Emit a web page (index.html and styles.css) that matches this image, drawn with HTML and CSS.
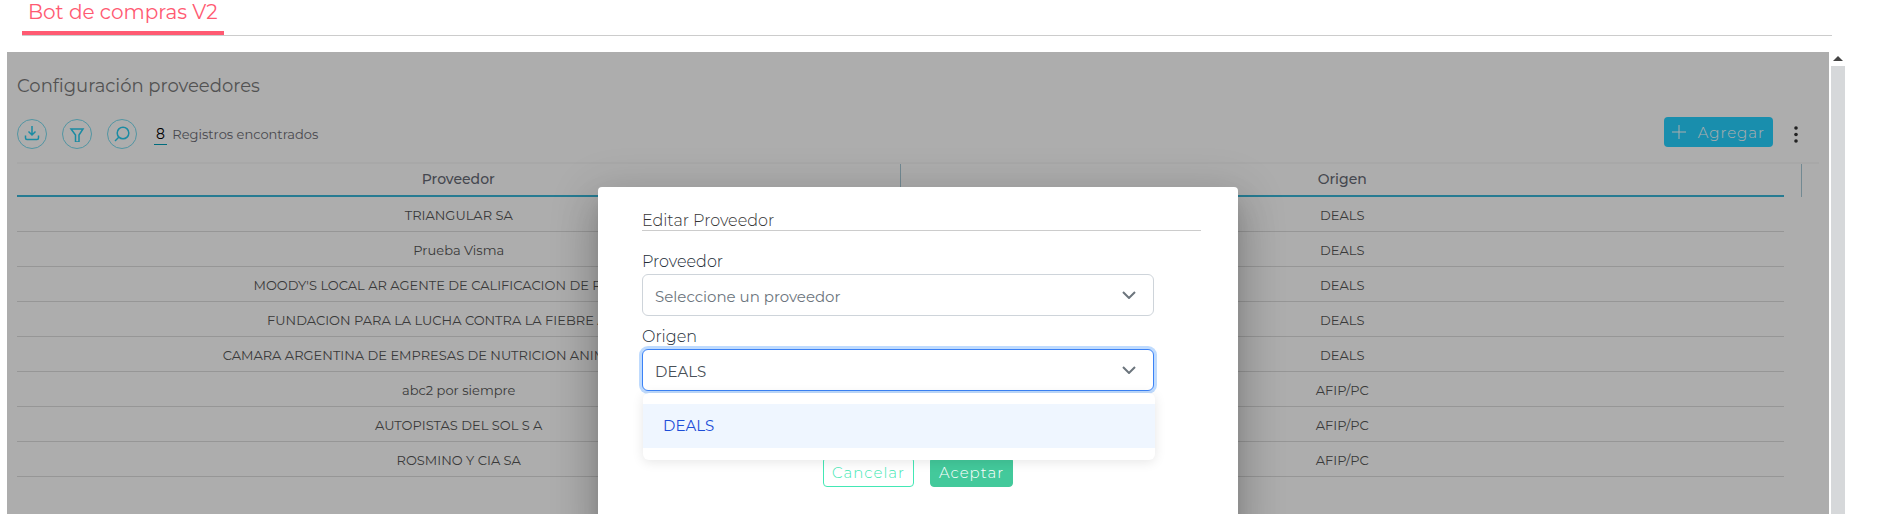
FILE: index.html
```html
<!DOCTYPE html>
<html lang="es">
<head>
    <meta charset="UTF-8">
    <meta name="viewport" content="width=device-width, initial-scale=1.0">
    <title>Bot de compras V2</title>
    <link rel="stylesheet" href="styles.css">
</head>
<body>
    <nav class="tabs">
        <a href="#" class="tab active">Bot de compras V2</a>
    </nav>

    <div class="content">
        <main class="panel">
            <h1>Configuración proveedores</h1>

            <div class="toolbar">
                <button class="icon-btn" aria-label="Descargar">
                    <svg width="16" height="16" viewBox="0 0 16 16"><path d="M8 0v9M4.500 5.500L8 9l3.500-3.500M1.500 9.500v2.500a1.500 1.500 0 0 0 1.500 1.500h10a1.500 1.500 0 0 0 1.500-1.500V9.500"/></svg>
                </button>
                <button class="icon-btn" aria-label="Filtrar">
                    <svg width="16" height="16" viewBox="0 0 16 16"><path d="M2 3h12L10 9v7H6.500V9z"/></svg>
                </button>
                <button class="icon-btn" aria-label="Buscar">
                    <svg width="16" height="16" viewBox="0 0 16 16"><circle cx="9" cy="7" r="5.800"/><path d="M5 11l-4 4"/></svg>
                </button>
                <p class="records"><span class="count">8</span> Registros encontrados</p>
                <button class="add-btn">
                    <svg width="14" height="14" viewBox="0 0 14 14"><path d="M7 0v14M0 7h14"/></svg>
                    Agregar
                </button>
                <button class="menu-btn" aria-label="Más opciones">
                    <svg width="4" height="18" viewBox="0 0 4 18"><circle cx="2" cy="3" r="1.800"/><circle cx="2" cy="9.500" r="1.800"/><circle cx="2" cy="16" r="1.800"/></svg>
                </button>
            </div>

            <div class="table-container">
                <table>
                    <thead>
                        <tr><th>Proveedor</th><th>Origen</th><td class="edge"></td></tr>
                    </thead>
                    <tbody>
                        <tr><td>TRIANGULAR SA</td><td>DEALS</td></tr>
                        <tr><td>Prueba Visma</td><td>DEALS</td></tr>
                        <tr><td>MOODY'S LOCAL AR AGENTE DE CALIFICACION DE RIESGO SA</td><td>DEALS</td></tr>
                        <tr><td>FUNDACION PARA LA LUCHA CONTRA LA FIEBRE AFTOSA</td><td>DEALS</td></tr>
                        <tr><td>CAMARA ARGENTINA DE EMPRESAS DE NUTRICION ANIMAL (C.A.E.N.A)</td><td>DEALS</td></tr>
                        <tr><td>abc2 por siempre</td><td>AFIP/PC</td></tr>
                        <tr><td>AUTOPISTAS DEL SOL S A</td><td>AFIP/PC</td></tr>
                        <tr><td>ROSMINO Y CIA SA</td><td>AFIP/PC</td></tr>
                    </tbody>
                </table>
            </div>

            <div class="overlay">
                <div class="dialog" role="dialog" aria-labelledby="dialogTitle">
                    <div class="dialog-body">
                        <h2 id="dialogTitle">Editar Proveedor</h2>

                        <label for="proveedor">Proveedor</label>
                        <div class="dropdown">
                            <select id="proveedor" class="placeholder">
                                <option>Seleccione un proveedor</option>
                            </select>
                            <svg class="chevron" width="14" height="8" viewBox="0 0 14 8"><path d="M1 1l6 6 6-6"/></svg>
                        </div>

                        <label for="origen">Origen</label>
                        <div class="dropdown open">
                            <select id="origen">
                                <option>DEALS</option>
                            </select>
                            <svg class="chevron" width="14" height="8" viewBox="0 0 14 8"><path d="M1 1l6 6 6-6"/></svg>
                            <ul class="options" role="listbox">
                                <li role="option" aria-selected="true">DEALS</li>
                            </ul>
                        </div>
                    </div>
                    <div class="dialog-actions">
                        <button class="btn-cancel">Cancelar</button>
                        <button class="btn-accept">Aceptar</button>
                    </div>
                </div>
            </div>
        </main>

        <div class="scrollbar">
            <svg width="10" height="5" viewBox="0 0 10 5"><path d="M5 0l5 5H0z"/></svg>
            <div class="thumb"></div>
        </div>
    </div>
</body>
</html>
```

FILE: styles.css
```css
* {
    box-sizing: border-box;
}
body {
    font-family: Montserrat, Inter, sans-serif;
    margin: 0;
    height: 100vh;
    display: flex;
    flex-direction: column;
    overflow: hidden;
    background-color: #fff;
    color: #495057;
}
button, select {
    font-family: inherit;
}
button {
    cursor: pointer;
}
svg {
    fill: none;
    stroke: currentColor;
}
h1, h2, p {
    margin: 0;
    font-weight: 400;
}

/* tabs */
.tabs {
    display: flex;
    height: 36px;
    margin: 0 48px 16px 22px;
    border-bottom: 1px solid #ccc;
}
.tab {
    height: 35px;
    padding: 0 6px;
    border-bottom: 4px solid #ff5a72;
    color: #ff5a72;
    font-size: 20px;
    line-height: 24px;
    text-decoration: none;
}

/* panel */
.content {
    flex: 1;
    min-height: 0;
    display: flex;
    gap: 2px;
    margin: 0 35px 0 7px;
}
.panel {
    position: relative;
    flex: 1;
    padding: 20px 10px 0;
    overflow: hidden;
}
h1 {
    color: #7a7a7a;
    font-size: 18px;
    line-height: 28px;
}
.toolbar {
    display: flex;
    align-items: center;
    gap: 15px;
    height: 62px;
    padding: 6px 21px 0 0;
}
.icon-btn {
    display: flex;
    align-items: center;
    justify-content: center;
    width: 30px;
    height: 30px;
    padding: 0;
    border: 1px solid #7adcf0;
    border-radius: 50%;
    background: none;
    color: #28cdf0;
}
.icon-btn svg {
    stroke-width: 1.5;
}
.records {
    padding-left: 2px;
    color: #6c6c74;
    font-size: 13px;
}
.count {
    margin-right: 2px;
    padding: 0 2px 1px;
    border-bottom: 1px solid #009fb8;
    color: #000;
    font-size: 14px;
}
.add-btn {
    display: flex;
    align-items: center;
    gap: 12px;
    height: 30px;
    margin: 0 6px 4px auto;
    padding: 0 8px;
    border: none;
    border-radius: 4px;
    background-color: #25d2ff;
    color: #fff;
    font-size: 15px;
    font-weight: 300;
    letter-spacing: 1px;
}
.menu-btn {
    display: flex;
    padding: 0;
    border: none;
    background: none;
    color: #333;
}
.menu-btn svg {
    fill: currentColor;
    stroke: none;
}

/* table */
.table-container {
    border-top: 2px solid #f8f8f8;
    padding-right: 17px;
}
table {
    width: 100%;
    border-collapse: separate;
    border-spacing: 0;
    table-layout: fixed;
    text-align: center;
}
th, td {
    padding: 0;
    white-space: nowrap;
}
th {
    height: 33px;
    padding-bottom: 2px;
    border-bottom: 2px solid #38b6d8;
    color: #666a75;
    font-size: 14px;
    font-weight: 500;
}
th:first-child {
    border-right: 1px solid #a8cbd8;
}
.edge {
    width: 18px;
    border-right: 1px solid #a8cbd8;
}
tbody td {
    height: 35px;
    padding-top: 2px;
    border-bottom: 1px solid #dedede;
    color: #565656;
    font-size: 13px;
}

/* dialog */
.overlay {
    position: absolute;
    inset: 0;
    display: flex;
    justify-content: center;
    align-items: flex-start;
    padding-top: 135px;
    background-color: rgba(0, 0, 0, 0.32);
}
.dialog {
    width: 640px;
    min-height: calc(100% + 24px);
    padding-top: 25px;
    border-radius: 4px;
    background-color: #fff;
    box-shadow: 0 11px 15px -7px rgba(0, 0, 0, 0.2), 0 24px 38px 3px rgba(0, 0, 0, 0.14), 0 9px 46px 8px rgba(0, 0, 0, 0.12);
}
.dialog-body {
    padding: 0 37px 0 44px;
}
h2 {
    margin-bottom: 17px;
    border-bottom: 1px solid #ccc;
    font-size: 16px;
    font-weight: 300;
    line-height: 18px;
    color: #333;
}
label {
    display: block;
    padding-top: 2px;
    font-size: 16px;
    font-weight: 300;
    line-height: 24px;
    color: #212b36;
}
.dropdown {
    position: relative;
    width: 512px;
    margin-bottom: 7px;
}
select {
    display: block;
    appearance: none;
    width: 100%;
    height: 42px;
    padding: 2px 12px 0;
    border: 1px solid #ced4da;
    border-radius: 6px;
    background-color: #fff;
    color: #495057;
    font-size: 15px;
}
.placeholder {
    color: #6c757d;
}
.open select {
    border-color: #3b82f6;
    box-shadow: 0 0 0 3px #bfdbfe;
}
.chevron {
    position: absolute;
    top: 17px;
    right: 18px;
    color: #6c757d;
    stroke-width: 2;
    pointer-events: none;
}
.options {
    position: absolute;
    top: 44px;
    left: 1px;
    width: 100%;
    margin: 0;
    padding: 11px 0 12px;
    border-radius: 6px;
    background-color: #fff;
    box-shadow: 0 2px 12px rgba(0, 0, 0, 0.1);
    list-style: none;
}
.options li {
    padding: 0 20px;
    background-color: #eff6ff;
    color: #1d4ed8;
    font-size: 15px;
    line-height: 44px;
}
.dialog-actions {
    display: flex;
    justify-content: center;
    gap: 16px;
    padding-top: 59px;
}
.dialog-actions button {
    height: 30px;
    padding: 0 8px;
    border: 1px solid #43e8b5;
    border-radius: 4px;
    background-color: #fff;
    color: #43e8b5;
    font-size: 15px;
    font-weight: 300;
    letter-spacing: 1px;
}
.dialog-actions .btn-accept {
    border-color: #43c99b;
    background-color: #43c99b;
    color: #fff;
}

/* scrollbar */
.scrollbar {
    display: flex;
    flex-direction: column;
    align-items: center;
    gap: 5px;
    width: 14px;
    padding-top: 4px;
}
.scrollbar svg {
    flex: none;
    fill: #444;
    stroke: none;
}
.thumb {
    flex: 1;
    width: 100%;
    background-color: #d6d8da;
}
```
